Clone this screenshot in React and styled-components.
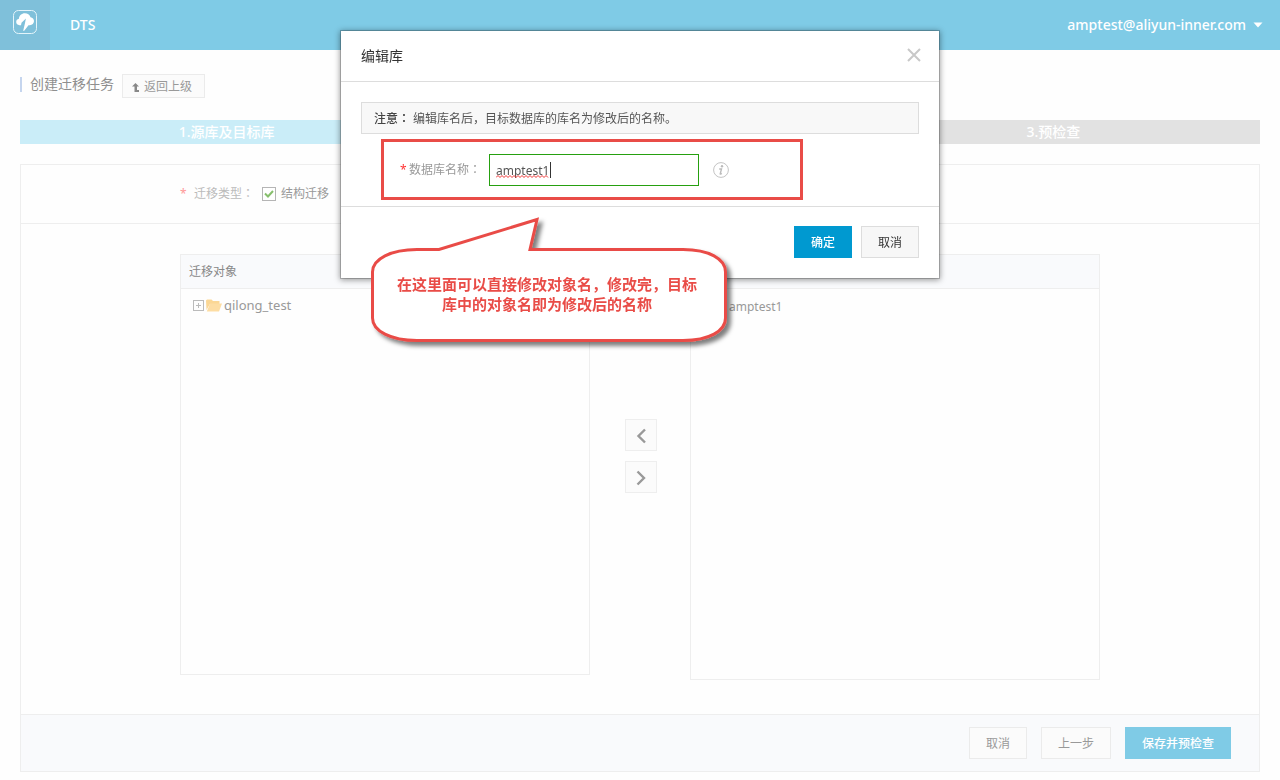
import React from "react";
import styled, { createGlobalStyle, css } from "styled-components";

const GlobalStyle = createGlobalStyle`
  * { box-sizing: border-box; }
  body {
    margin: 0;
    background: #fefefe;
    color: #999;
    font: 12px/18px "Noto Sans", "Noto Sans CJK SC", sans-serif;
  }
  button, input { font: inherit; }
  button { cursor: pointer; }
  svg { display: block; flex: none; }
`;

const TopBar = styled.header`
  display: flex;
  height: 50px;
  align-items: center;
  background: #7fcbe6;
  color: #fff;
  font-size: 14px;
  font-weight: 500;
`;

const LogoLink = styled.a`
  display: flex;
  width: 50px;
  height: 50px;
  padding: 10px 13px;
  background: #7fc0da;
`;

const Product = styled.a`
  margin-left: 20px;
  color: #fff;
  text-decoration: none;
`;

const Account = styled.button`
  display: flex;
  align-items: center;
  gap: 7px;
  margin-left: auto;
  padding: 0 17px;
  border: 0;
  background: none;
  color: #fff;
`;

const Page = styled.main`
  padding: 24px 20px 8px;
`;

const TitleRow = styled.div`
  display: flex;
  height: 24px;
  align-items: center;
  margin-bottom: 22px;
`;

const Title = styled.h1`
  display: flex;
  align-items: center;
  gap: 8px;
  margin: 0 8px 4px 0;
  font-size: 14px;
  font-weight: 400;
  line-height: 18px;
  color: #8f8f8f;

  &::before {
    content: "";
    width: 2px;
    height: 15px;
    background: #c5d5ee;
  }
`;

const Button = styled.button`
  height: ${(p) => (p.$small ? "24px" : "32px")};
  padding: 2px ${(p) => (p.$small ? "12px 0 9px" : "16px 0")};
  border: 1px solid ${(p) => (p.$strong ? "#ddd" : "#ebebeb")};
  background: ${(p) => (p.$strong ? "#f7f7f7" : "#fbfbfb")};
  color: ${(p) => (p.$strong ? "#333" : "#999")};
  display: inline-flex;
  align-items: center;
  gap: 5px;

  ${(p) =>
    p.$primary &&
    css`
      border-color: ${p.$strong ? "#0099d0" : "#7fcbe6"};
      background: ${p.$strong ? "#0099d0" : "#7fcbe6"};
      color: #fff;
      font-weight: 500;
    `}
`;

const Steps = styled.ol`
  display: flex;
  height: 24px;
  margin: 0 0 20px;
  padding: 0;
  list-style: none;
`;

const Step = styled.li`
  flex: 1;
  background: ${(p) => (p.$done ? "#caedf8" : "#e2e2e2")};
  color: #fff;
  font-size: 14px;
  font-weight: 500;
  line-height: 24px;
  text-align: center;
`;

const Panel = styled.section`
  border: 1px solid #eee;
`;

const Section = styled.div`
  padding: ${(p) => (p.$tall ? "30px 20px 34px" : "20px")};
  border-bottom: 1px solid #eee;
`;

const Center = styled.div`
  display: flex;
  max-width: 920px;
  margin: 0 auto;
  align-items: ${(p) => (p.$top ? "flex-start" : "center")};
  justify-content: space-between;
`;

const TypeField = styled.div`
  display: flex;
  flex: 1;
  align-items: center;
  color: #bbb;
`;

const Star = styled.span`
  width: ${(p) => (p.$wide ? "14px" : "9px")};
  color: ${(p) => (p.$wide ? "#f99" : "#f33")};
`;

/* The Traditional Chinese face centres the colon in its cell. */
const Colon = styled.span`
  font-family: "Noto Sans CJK TC", sans-serif;
  line-height: 1;
`;

const Check = styled.label`
  display: flex;
  position: relative;
  align-items: center;
  gap: 5px;
  margin-left: 8px;
  color: #999;

  input {
    appearance: none;
    width: 14px;
    height: 14px;
    margin: 0;
    border: 1px solid #b5b5b5;
    background: #fff;
  }
  svg {
    position: absolute;
    left: 2px;
    top: 4px;
    pointer-events: none;
  }
`;

const ListBox = styled.section`
  width: 410px;
  min-height: ${(p) => (p.$tall ? "426px" : "421px")};
  border: 1px solid #eee;
`;

const ListTitle = styled.h2`
  height: 34px;
  margin: 0;
  padding: 0 8px;
  border-bottom: 1px solid #eee;
  background: #f9fafc;
  font-size: 12px;
  font-weight: 400;
  line-height: 34px;
  color: #888;
`;

const TreeItem = styled.div`
  display: flex;
  align-items: center;
  padding: ${(p) => (p.$indent ? "9px 0 0 38px" : "7px 0 0 12px")};
  gap: 2px;
  color: #999;
  font-size: ${(p) => (p.$indent ? "12px" : "13px")};
`;

const IconButton = styled.button`
  display: inline-flex;
  padding: 0;
  border: 0;
  background: none;
`;

const Movers = styled.div`
  display: flex;
  flex-direction: column;
  gap: 10px;
  margin: 165px 0 0 2px;
`;

const Mover = styled.button`
  display: flex;
  width: 32px;
  height: 32px;
  align-items: center;
  justify-content: center;
  padding: 1px 0 0;
  border: 1px solid #eee;
  background: #fbfbfb;
`;

const Actions = styled.footer`
  display: flex;
  justify-content: flex-end;
  gap: 14px;
  padding: 12px 28px;
  background: #f9fafc;
`;

const Layer = styled.div`
  position: fixed;
  inset: 0;
  display: flex;
  align-items: flex-start;
  justify-content: center;
  padding: 30px 20px;
`;

const DialogWrap = styled.div`
  position: relative;
  width: 600px;
`;

const Dialog = styled.div`
  border: 1px solid rgba(0, 0, 0, 0.2);
  background: #fff;
  background-clip: padding-box;
  box-shadow: 0 1px 6px rgba(0, 0, 0, 0.4);
`;

const DialogHead = styled.div`
  display: flex;
  height: 51px;
  align-items: center;
  justify-content: space-between;
  padding: 0 18px 2px 20px;
  border-bottom: 1px solid #ddd;

  h2 {
    margin: 0;
    padding-top: 2px;
    font-size: 14px;
    font-weight: 400;
    color: #333;
  }
`;

const DialogBody = styled.div`
  padding: 20px 20px 6px;
`;

const Notice = styled.p`
  margin: 0 0 5px;
  padding: 7px 12px 5px;
  border: 1px solid #ddd;
  background: #f8f8f8;
  color: #555;

  strong {
    margin-right: 3px;
    font-weight: 500;
    color: #444;
  }
`;

const Highlight = styled.div`
  display: flex;
  width: 422px;
  height: 61px;
  align-items: center;
  margin-left: 20px;
  padding-left: 16px;
  border: 3px solid #e94c47;
  color: #999;
`;

const InputWrap = styled.div`
  position: relative;
  margin: 0 14px 0 8px;

  svg {
    position: absolute;
    left: 7px;
    top: 8px;
    pointer-events: none;
  }
`;

const TextInput = styled.input`
  display: block;
  width: 210px;
  height: 32px;
  padding: 2px 6px 0;
  border: 1px solid #26a010;
  outline: 0;
  background: #fff;
  color: #555;
`;

const DialogFoot = styled.div`
  display: flex;
  justify-content: flex-end;
  gap: 9px;
  padding: 19px 20px 20px;
  border-top: 1px solid #ddd;
`;

const Callout = styled.div`
  position: absolute;
  left: 31px;
  top: 186px;
  width: 366px;
  height: 136px;
  padding-top: 58px;

  svg {
    position: absolute;
    left: 0;
    top: 0;
  }
  p {
    position: relative;
    width: 352px;
    margin: 0;
    color: #e94c47;
    font-family: "Noto Sans CJK SC", sans-serif;
    font-size: 15px;
    font-weight: 700;
    line-height: 20px;
    text-align: center;
  }
`;

const Logo = () => (
  <svg width="24" height="24" viewBox="0 0 24 24" fill="none">
    <rect x="0.5" y="0.5" width="23" height="23" rx="5" stroke="#e4f4fa" />
    <path
      d="M8 15.200H6.500C4.500 15 3.200 13.700 3.200 12c0-1.700 1-2.900 2.700-3.200C6.200 5.600 8.600 3.300 11.800 3.300c2.800 0 4.900 1.600 5.700 4 2.100.3 3.500 1.800 3.500 3.800 0 2.300-1.700 4-4.200 4.200h-1.300L11 21l-.8-.3 1.700-7.200 1-5-4.400 4.200z"
      fill="#fff"
    />
  </svg>
);

const Caret = () => (
  <svg width="10" height="6" viewBox="0 0 10 6">
    <path d="M0.500 0.500h9L5 5.500z" fill="#fff" />
  </svg>
);

const UpArrow = () => (
  <svg width="7" height="9" viewBox="0 0 7 9">
    <path d="M3.500 0L7 3.500H5V7h2v2H2.500V3.500H0z" fill="#888" />
  </svg>
);

const Expand = () => (
  <svg width="11" height="11" viewBox="0 0 11 11" fill="none" stroke="#bbb">
    <rect x="0.5" y="0.5" width="10" height="10" />
    <path d="M3 5.500h5M5.500 3v5" />
  </svg>
);

const Folder = () => (
  <svg width="16" height="13" viewBox="0 0 16 13">
    <path d="M0 1.500L1 .5h4.500L7 2h6.500v3H4L0.500 11z" fill="#fbd795" />
    <path d="M4 4.500h12L13 12.500H0.800z" fill="#fddda3" />
  </svg>
);

const Chevron = ({ right }) => (
  <svg width="10" height="16" viewBox="0 0 10 16" fill="none" stroke="#999" strokeWidth="2.4">
    <path d={right ? "M1.500 1.500L8 8l-6.500 6.500" : "M9 1.500L2.500 8 9 14.500"} />
  </svg>
);

const Info = () => (
  <svg width="16" height="16" viewBox="0 0 16 16" fill="none">
    <circle cx="8" cy="8" r="7.400" stroke="#c4c4c4" />
    <circle cx="9" cy="4.200" r="1.200" fill="#bbb" />
    <path d="M6.200 7h2.300l-1.300 4.800c-.1.500.4.500 1.600-.4" stroke="#bbb" strokeWidth="1.400" />
  </svg>
);

export default function App() {
  return (
    <>
      <GlobalStyle />
      <TopBar>
        <LogoLink href="#" aria-label="Home">
          <Logo />
        </LogoLink>
        <Product href="#">DTS</Product>
        <Account type="button">
          amptest@aliyun-inner.com
          <Caret />
        </Account>
      </TopBar>

      <Page>
        <TitleRow>
          <Title>创建迁移任务</Title>
          <Button type="button" $small>
            <UpArrow />
            返回上级
          </Button>
        </TitleRow>

        <Steps>
          <Step $done>1.源库及目标库</Step>
          <Step $done />
          <Step>3.预检查</Step>
        </Steps>

        <Panel>
          <Section>
            <Center>
              <TypeField>
                <Star $wide>*</Star>
                <span>
                  迁移类型<Colon>：</Colon>
                </span>
                <Check>
                  <input type="checkbox" defaultChecked />
                  结构迁移
                  <svg width="10" height="9" viewBox="0 0 10 9" fill="none">
                    <path d="M1 4.500l3 3L9 2" stroke="#86bf6c" strokeWidth="2" />
                  </svg>
                </Check>
              </TypeField>
            </Center>
          </Section>

          <Section $tall>
            <Center $top>
              <ListBox>
                <ListTitle>迁移对象</ListTitle>
                <TreeItem>
                  <IconButton type="button" aria-label="qilong_test">
                    <Expand />
                  </IconButton>
                  <Folder />
                  qilong_test
                </TreeItem>
              </ListBox>
              <Movers>
                <Mover type="button" aria-label="<">
                  <Chevron />
                </Mover>
                <Mover type="button" aria-label=">">
                  <Chevron right />
                </Mover>
              </Movers>
              <ListBox $tall>
                <ListTitle />
                <TreeItem $indent>amptest1</TreeItem>
              </ListBox>
            </Center>
          </Section>

          <Actions>
            <Button type="button">取消</Button>
            <Button type="button">上一步</Button>
            <Button type="button" $primary>
              保存并预检查
            </Button>
          </Actions>
        </Panel>
      </Page>

      <Layer>
        <DialogWrap>
          <Dialog role="dialog" aria-labelledby="dialog-title">
            <DialogHead>
              <h2 id="dialog-title">编辑库</h2>
              <IconButton type="button" aria-label="×">
                <svg width="14" height="14" viewBox="0 0 14 14" stroke="#c8c8c8" strokeWidth="2">
                  <path d="M1 1l12 12M13 1L1 13" />
                </svg>
              </IconButton>
            </DialogHead>
            <DialogBody>
              <Notice>
                <strong>
                  注意<Colon>：</Colon>
                </strong>
                编辑库名后，目标数据库的库名为修改后的名称。
              </Notice>
              <Highlight>
                <Star>*</Star>
                <label htmlFor="db-name">
                  数据库名称<Colon>：</Colon>
                </label>
                <InputWrap>
                  <TextInput id="db-name" defaultValue="amptest1" spellCheck={false} />
                  <svg width="56" height="17" viewBox="0 0 56 17" fill="none">
                    <path
                      d={"M0 15.500" + "l2-2l2 2".repeat(13)}
                      stroke="#e33"
                    />
                    <path d="M54.500 0v16" stroke="#333" />
                  </svg>
                </InputWrap>
                <Info />
              </Highlight>
            </DialogBody>
            <DialogFoot>
              <Button type="button" $primary $strong>
                确定
              </Button>
              <Button type="button" $strong>
                取消
              </Button>
            </DialogFoot>
          </Dialog>

          <Callout>
            <svg width="366" height="136" viewBox="0 0 366 136">
              <defs>
                <filter id="callout-shadow" x="-5%" y="-5%" width="115%" height="120%">
                  <feDropShadow dx="4" dy="4" stdDeviation="2" floodColor="#000" floodOpacity="0.5" />
                </filter>
              </defs>
              <path
                d="M46 33.500H68L166 3.500L159 33.500H312C338 33.500 354.500 43 354.500 56V102C354.500 115 338 124.500 312 124.500H46C20 124.500 1.500 115 1.500 102V56C1.500 43 20 33.500 46 33.500Z"
                fill="#fff"
                stroke="#e94c47"
                strokeWidth="3"
                filter="url(#callout-shadow)"
              />
            </svg>
            <p>
              在这里面可以直接修改对象名，修改完，目标
              <br />
              库中的对象名即为修改后的名称
            </p>
          </Callout>
        </DialogWrap>
      </Layer>
    </>
  );
}
